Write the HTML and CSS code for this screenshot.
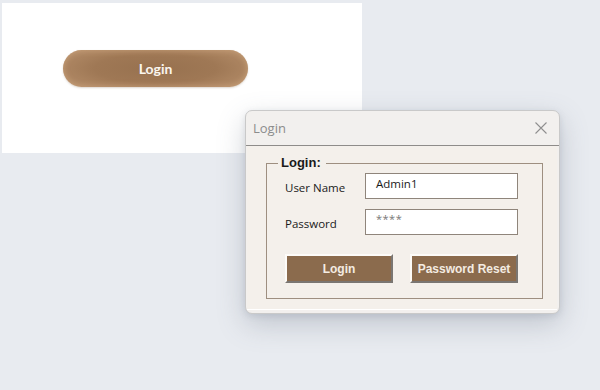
FILE: index.html
```html
<!DOCTYPE html>
<html>
<head>
<meta charset="utf-8">
<link rel="stylesheet" href="styles.css">
</head>
<body>
<div class="desk">
  <div class="sheet">
    <button class="pill">Login</button>
  </div>
  <div class="dialog">
    <div class="titlebar">
      <span class="title">Login</span>
      <svg class="close" width="14" height="14" viewBox="0 0 14 14"><path d="M1.5 1.5 L12.5 12.5 M12.5 1.5 L1.5 12.5" stroke="#8f8f8f" stroke-width="1.1" fill="none"/></svg>
    </div>
    <div class="body">
      <fieldset class="group">
        <legend class="legend">Login:</legend>
        <div class="row">
          <span class="label">User Name</span>
          <div class="field">Admin1</div>
        </div>
        <div class="row">
          <span class="label">Password</span>
          <div class="field pw">****</div>
        </div>
        <div class="buttons">
          <button class="btn">Login</button>
          <button class="btn">Password Reset</button>
        </div>
      </fieldset>
    </div>
  </div>
</div>
</body>
</html>
```
FILE: styles.css
```css
html, body {
  margin: 0;
  padding: 0;
  background: #e8ebf0;
}
.desk {
  position: relative;
  width: 600px;
  height: 390px;
  overflow: hidden;
  background: #e8ebf0;
}
.sheet {
  margin: 3px 0 0 2px;
  width: 360px;
  height: 150px;
  background: #ffffff;
  padding: 47px 0 0 61px;
  box-sizing: border-box;
}
.pill {
  display: block;
  width: 185px;
  height: 37px;
  border: none;
  border-radius: 19px;
  background: radial-gradient(ellipse 60% 70% at 50% 50%, #97714f 0%, #9f7855 55%, #b48d69 100%);
  box-shadow: inset 0 0 6px rgba(210,170,130,0.7), 0 1px 2px rgba(120,90,60,0.25);
  color: #fbf6ef;
  font-family: Lato, "Open Sans", sans-serif;
  font-weight: 700;
  font-size: 14px;
  padding: 0;
}
.dialog {
  position: absolute;
  left: 245px;
  top: 110px;
  width: 315px;
  height: 204px;
  background: #f2f0ee;
  border: 1px solid #c9c9c9;
  border-radius: 7px;
  box-sizing: border-box;
  box-shadow: 0 10px 28px rgba(90,100,120,0.28), 0 2px 6px rgba(90,100,120,0.15);
  display: flex;
  flex-direction: column;
}
.titlebar {
  height: 34px;
  display: flex;
  align-items: center;
  justify-content: space-between;
  padding: 0 11px 0 7px;
  border-bottom: 1px solid #8e8c8a;
}
.title {
  font-family: "Open Sans", "Noto Sans", sans-serif;
  font-size: 13px;
  color: #8c8c8c;
}
.close { display: block; }
.body {
  flex: 1;
  margin: 0 2px 3px 1px;
  background: #f4f0eb;
  padding: 11px 14px 10px 19px;
  box-sizing: border-box;
  display: flex;
  border-bottom: 1px solid #ffffff;
}
.group {
  flex: 1;
  margin: 0;
  border: 1px solid #9e8f80;
  padding: 0 24px 0 18px;
  display: flex;
  flex-direction: column;
}
.legend {
  font-family: "Liberation Sans", Arial, sans-serif;
  font-weight: 700;
  font-size: 13px;
  color: #1a1a1a;
  padding: 0 5px 0 3px;
  margin-left: -7px;
  line-height: 12px;
}
.row {
  display: flex;
  align-items: center;
  justify-content: space-between;
  margin-top: 4px;
  height: 26px;
}
.row + .row { margin-top: 10px; }
.label {
  font-family: "Open Sans", "Noto Sans", sans-serif;
  font-size: 11.5px;
  color: #1a1a1a;
  padding-top: 3px;
}
.field {
  width: 153px;
  height: 26px;
  box-sizing: border-box;
  background: #ffffff;
  border: 1px solid #8f857b;
  font-family: "Open Sans", "Noto Sans", sans-serif;
  font-size: 11.5px;
  color: #1a1a1a;
  padding: 2px 0 0 10px;
}
.field.pw {
  font-size: 11px;
  color: #777;
  letter-spacing: 0.5px;
  padding-top: 1px;
}
.buttons {
  display: flex;
  justify-content: space-between;
  margin-top: 19px;
}
.btn {
  width: 108px;
  height: 29px;
  box-sizing: border-box;
  background: #8b6b4d;
  border-style: solid;
  border-width: 2px;
  border-color: #fdfbf8 #7a7672 #7a7672 #fdfbf8;
  color: #f4ece2;
  font-family: "Liberation Sans", Arial, sans-serif;
  font-weight: 700;
  font-size: 12px;
  padding: 0;
}
```
